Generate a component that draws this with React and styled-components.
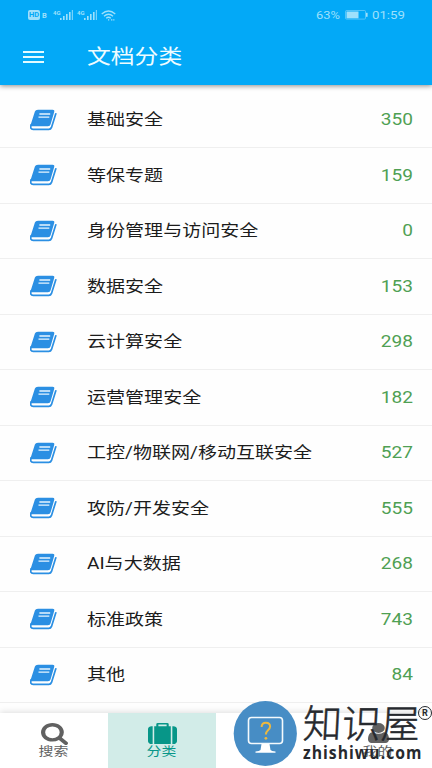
import React from 'react'
import styled, { createGlobalStyle } from 'styled-components'

const GlobalStyle = createGlobalStyle`
  * {
    box-sizing: border-box;
  }
  body {
    margin: 0;
    background: #fff;
    font-family: Roboto, 'Noto Sans CJK SC', sans-serif;
  }
`

const Screen = styled.div`
  position: relative;
  display: flex;
  flex-direction: column;
  width: 432px;
  height: 768px;
  overflow: hidden;
  background: #fefefe;
`

const Header = styled.header`
  flex: none;
  height: 84.5px;
  background: #03a9f7;
  box-shadow: 0 1px 5px rgba(0, 0, 0, 0.45);
`

const StatusBar = styled.div`
  display: flex;
  align-items: center;
  justify-content: space-between;
  height: 30px;
  padding: 0 27px 0 28px;
  color: #9fe0fb;
`

const StatusGroup = styled.div`
  display: flex;
  align-items: center;
`

// glyphs on this device are wider than tall
const Wide = styled.span`
  display: inline-block;
  white-space: nowrap;
  transform: scaleX(${p => p.$scale || 1.19});
  transform-origin: ${p => p.$origin || 'left'} center;
`

const StatusText = styled(Wide)`
  width: ${p => p.$width}px;
  font-size: 11.5px;
  line-height: 14px;
`

const TitleBar = styled.div`
  display: flex;
  align-items: center;
  height: 54px;
  padding-left: 23px;
`

const MenuButton = styled.div`
  display: flex;
  flex-direction: column;
  gap: 3px;
  width: 63.5px;
`

const MenuLine = styled.span`
  width: 21px;
  height: 2px;
  background: #e2fbff;
`

const Title = styled(Wide)`
  font-size: 20px;
  line-height: 28px;
  color: #effcff;
`

const List = styled.main`
  flex: 1;
  min-height: 0;
  padding-top: 8px;
  overflow: hidden;
`

const Row = styled.div`
  display: flex;
  align-items: center;
  height: 55.5px;
  padding: 0 19.5px 0 30px;
  border-bottom: 1px solid #efefef;
`

const RowLabel = styled(Wide)`
  flex: 1;
  margin-left: 29px;
  padding-top: 1px;
  font-size: 16px;
  line-height: 24px;
  color: #1c1c1c;
`

const Count = styled(Wide)`
  padding-top: 1px;
  font-size: 16px;
  line-height: 24px;
  color: #4fa053;
`

const Nav = styled.nav`
  flex: none;
  display: grid;
  grid-template-columns: repeat(4, 1fr);
  height: 55px;
  background: #fff;
  box-shadow: 0 -1px 6px rgba(0, 0, 0, 0.13);
`

const Tab = styled.div`
  display: flex;
  flex-direction: column;
  align-items: center;
  padding-top: 10px;
  color: ${p => (p.$active ? '#079688' : '#616161')};
  background: ${p => (p.$active ? '#d2ece8' : 'transparent')};
`

const TabLabel = styled(Wide)`
  margin-top: ${p => p.$gap}px;
  font-size: 12.5px;
  line-height: 15px;
`

const Watermark = styled.div`
  position: absolute;
  left: 233px;
  top: 700px;
  display: flex;
  width: 199px;
  height: 68px;
`

const Brand = styled.div`
  display: flex;
  flex-direction: column;
  margin-left: 6px;
  color: #26292e;
`

const BrandName = styled.span`
  font-family: 'Noto Sans CJK SC', sans-serif;
  font-size: 39px;
  font-weight: 300;
  line-height: 42px;
  height: 43px;
  white-space: nowrap;
  transform: skewX(-3deg);
  -webkit-text-stroke: 0.5px #26292e;
`

const BrandUrl = styled.span`
  width: 120px;
  font-family: 'Open Sans', 'Noto Sans', sans-serif;
  font-size: 17px;
  font-weight: 700;
  line-height: 20px;
  letter-spacing: 1.1px;
  white-space: nowrap;
  transform: scaleX(0.925);
  transform-origin: left center;
`

const Registered = styled.span`
  position: absolute;
  left: 185px;
  top: 6px;
  display: flex;
  align-items: center;
  justify-content: center;
  width: 14px;
  height: 14px;
  border: 1.5px solid #26292e;
  border-radius: 50%;
  font-size: 9px;
  font-weight: 700;
  line-height: 9px;
  color: #26292e;
`

const shapes = {
  search: {
    box: '64 128 1664 1664',
    d: 'M1216 832q0-185-131.5-316.5t-316.5-131.5-316.5 131.5-131.5 316.5 131.5 316.5 316.5 131.5 316.5-131.5 131.5-316.5zm512 832q0 52-38 90t-90 38q-54 0-90-38l-343-342q-179 124-399 124-143 0-273.5-55.5t-225-150-150-225-55.5-273.5 55.5-273.5 150-225 225-150 273.5-55.5 273.5 55.5 225 150 150 225 55.5 273.5q0 220-124 399l343 343q37 37 37 90z'
  },
  suitcase: {
    box: '0 0 1792 1664',
    d: 'M640 256h512v-128h-512v128zm-352 0v1408h-64q-92 0-158-66t-66-158v-960q0-92 66-158t158-66h64zm1120 0v1408h-1024v-1408h128v-160q0-40 28-68t68-28h576q40 0 68 28t28 68v160h128zm384 224v960q0 92-66 158t-158 66h-64v-1408h64q92 0 158 66t66 158z'
  },
  user: {
    box: '256 128 1280 1536',
    d: 'M1536 1399q0 109-62.5 187t-150.5 78h-854q-88 0-150.5-78t-62.5-187q0-85 8.5-160.5t31.5-152 58.5-131 94-89 134.5-34.5q131 128 313 128t313-128q76 0 134.5 34.5t94 89 58.5 131 31.5 152 8.5 160.5zm-256-887q0 159-112.5 271.5t-271.5 112.5-271.5-112.5-112.5-271.5 112.5-271.5 271.5-112.5 271.5 112.5 112.5 271.5z'
  }
}

const Icon = ({ name, width, height }) => (
  <svg
    width={width}
    height={height}
    viewBox={shapes[name].box}
    preserveAspectRatio='none'
    fill='currentColor'
  >
    <path d={shapes[name].d} />
  </svg>
)

const Book = () => (
  <svg width='28' height='22' viewBox='0 0 28 22' fill='none'>
    <path
      d='M8 .8h14.6q2.2 0 1.6 2.1l-3.6 12.4q-.5 1.9-2.6 1.9H1.2q-1 0-.6-1.3L4.9 2.6Q5.5.8 8 .8z'
      fill='#2b8fe3'
    />
    <path
      d='M1.2 15.6q-1.6 4.8 2 4.8h15.6q2 0 2.7-2l4.3-13.6'
      stroke='#2b8fe3'
      strokeWidth='1.7'
      strokeLinecap='round'
    />
    <path d='M9.4 5h10.8M8.5 8.1h10.8' stroke='#e6f5ff' strokeWidth='1.4' />
  </svg>
)

const HdBadge = styled.span`
  width: 12px;
  height: 10px;
  border-radius: 2px;
  background: #9fe0fb;
  color: #03a9f7;
  font-size: 7.5px;
  font-weight: 700;
  line-height: 10px;
  text-align: center;
`

const VoiceTag = styled.span`
  width: 7px;
  margin-left: 2px;
  padding-top: 2px;
  font-size: 7.5px;
  font-weight: 700;
  line-height: 8px;
`

const SimTag = styled.span`
  width: 7px;
  margin-left: ${p => p.$left}px;
  align-self: flex-start;
  font-size: 6px;
  font-weight: 700;
  line-height: 6px;
`

const Signal = () => (
  <svg width='13' height='10' viewBox='0 0 13 10' fill='currentColor'>
    <rect x='0' y='8' width='1.6' height='2' />
    <rect x='3' y='6' width='1.6' height='4' />
    <rect x='6' y='4' width='1.6' height='6' />
    <rect x='9' y='2' width='1.6' height='8' />
    <rect x='11.8' y='0' width='1.2' height='10' opacity='0.75' />
  </svg>
)

const Wifi = styled.svg`
  margin-left: 4px;
`

const Battery = styled.svg`
  margin: 0 4px 0 3px;
`

const Status = () => (
  <StatusBar>
    <StatusGroup>
      <HdBadge>HD</HdBadge>
      <VoiceTag>B</VoiceTag>
      <SimTag $left={4}>4G</SimTag>
      <Signal />
      <SimTag $left={4}>4G</SimTag>
      <Signal />
      <Wifi width='15' height='11' viewBox='0 0 15 11' fill='none' stroke='currentColor' strokeWidth='1.3'>
        <path d='M.7 4Q7.5-2 14.3 4M3 6.2q4.5-4 9 0M5.2 8.3q2.3-2 4.6 0' />
        <path d='M7 9.8h1.2M10 9.8h1.4M12.2 9.8h1.2' />
      </Wifi>
    </StatusGroup>
    <StatusGroup>
      <StatusText $width={26} $scale={1.12}>63%</StatusText>
      <Battery width='23' height='10' viewBox='0 0 23 10' fill='currentColor'>
        <rect x='.5' y='.5' width='20' height='8.6' rx='1' fill='none' stroke='currentColor' opacity='0.5' />
        <rect x='1.5' y='1.5' width='12' height='6.8' />
        <rect x='21' y='2.8' width='1.6' height='4' />
      </Battery>
      <StatusText $width={33} $scale={1.15}>01:59</StatusText>
    </StatusGroup>
  </StatusBar>
)

const Monitor = () => (
  <svg width='64' height='66' viewBox='0 0 64 66'>
    <ellipse cx='32.3' cy='33.5' rx='31.6' ry='32.4' fill='#478dc5' />
    <rect x='15.5' y='17.5' width='34' height='26' rx='3' fill='none' stroke='#f4fafd' strokeWidth='1.6' />
    <path d='M28.5 44h8l1 6q1 1.2 5 1.4v1.4h-20v-1.4q4-.2 5-1.4z' fill='#fff' />
    <path d='M28.6 27q.2-4.2 4.2-4.2 4.3 0 4.3 3.8 0 2.1-2.3 3.9-1.9 1.5-1.9 4' fill='none' stroke='#edb83f' strokeWidth='2' />
    <circle cx='32.9' cy='38.3' r='1.4' fill='#edb83f' />
  </svg>
)

const categories = [
  ['基础安全', 350],
  ['等保专题', 159],
  ['身份管理与访问安全', 0],
  ['数据安全', 153],
  ['云计算安全', 298],
  ['运营管理安全', 182],
  ['工控/物联网/移动互联安全', 527],
  ['攻防/开发安全', 555],
  ['AI与大数据', 268],
  ['标准政策', 743],
  ['其他', 84]
]

const App = () => (
  <Screen>
    <GlobalStyle />
    <Header>
      <Status />
      <TitleBar>
        <MenuButton>
          <MenuLine />
          <MenuLine />
          <MenuLine />
        </MenuButton>
        <Title>文档分类</Title>
      </TitleBar>
    </Header>
    <List>
      {categories.map(([label, count]) => (
        <Row key={label}>
          <Book />
          <RowLabel>{label}</RowLabel>
          <Count $origin='right'>{count}</Count>
        </Row>
      ))}
    </List>
    <Nav>
      <Tab>
        <Icon name='search' width={27} height={22} />
        <TabLabel $gap={-1} $origin='center'>搜索</TabLabel>
      </Tab>
      <Tab $active>
        <Icon name='suitcase' width={29} height={21} />
        <TabLabel $gap={0} $origin='center'>分类</TabLabel>
      </Tab>
      <Tab />
      <Tab>
        <Icon name='user' width={21} height={20} />
        <TabLabel $gap={1} $origin='center'>我的</TabLabel>
      </Tab>
    </Nav>
    <Watermark>
      <Monitor />
      <Brand>
        <BrandName>知识屋</BrandName>
        <BrandUrl>zhishiwu.com</BrandUrl>
      </Brand>
      <Registered>R</Registered>
    </Watermark>
  </Screen>
)

export default App
